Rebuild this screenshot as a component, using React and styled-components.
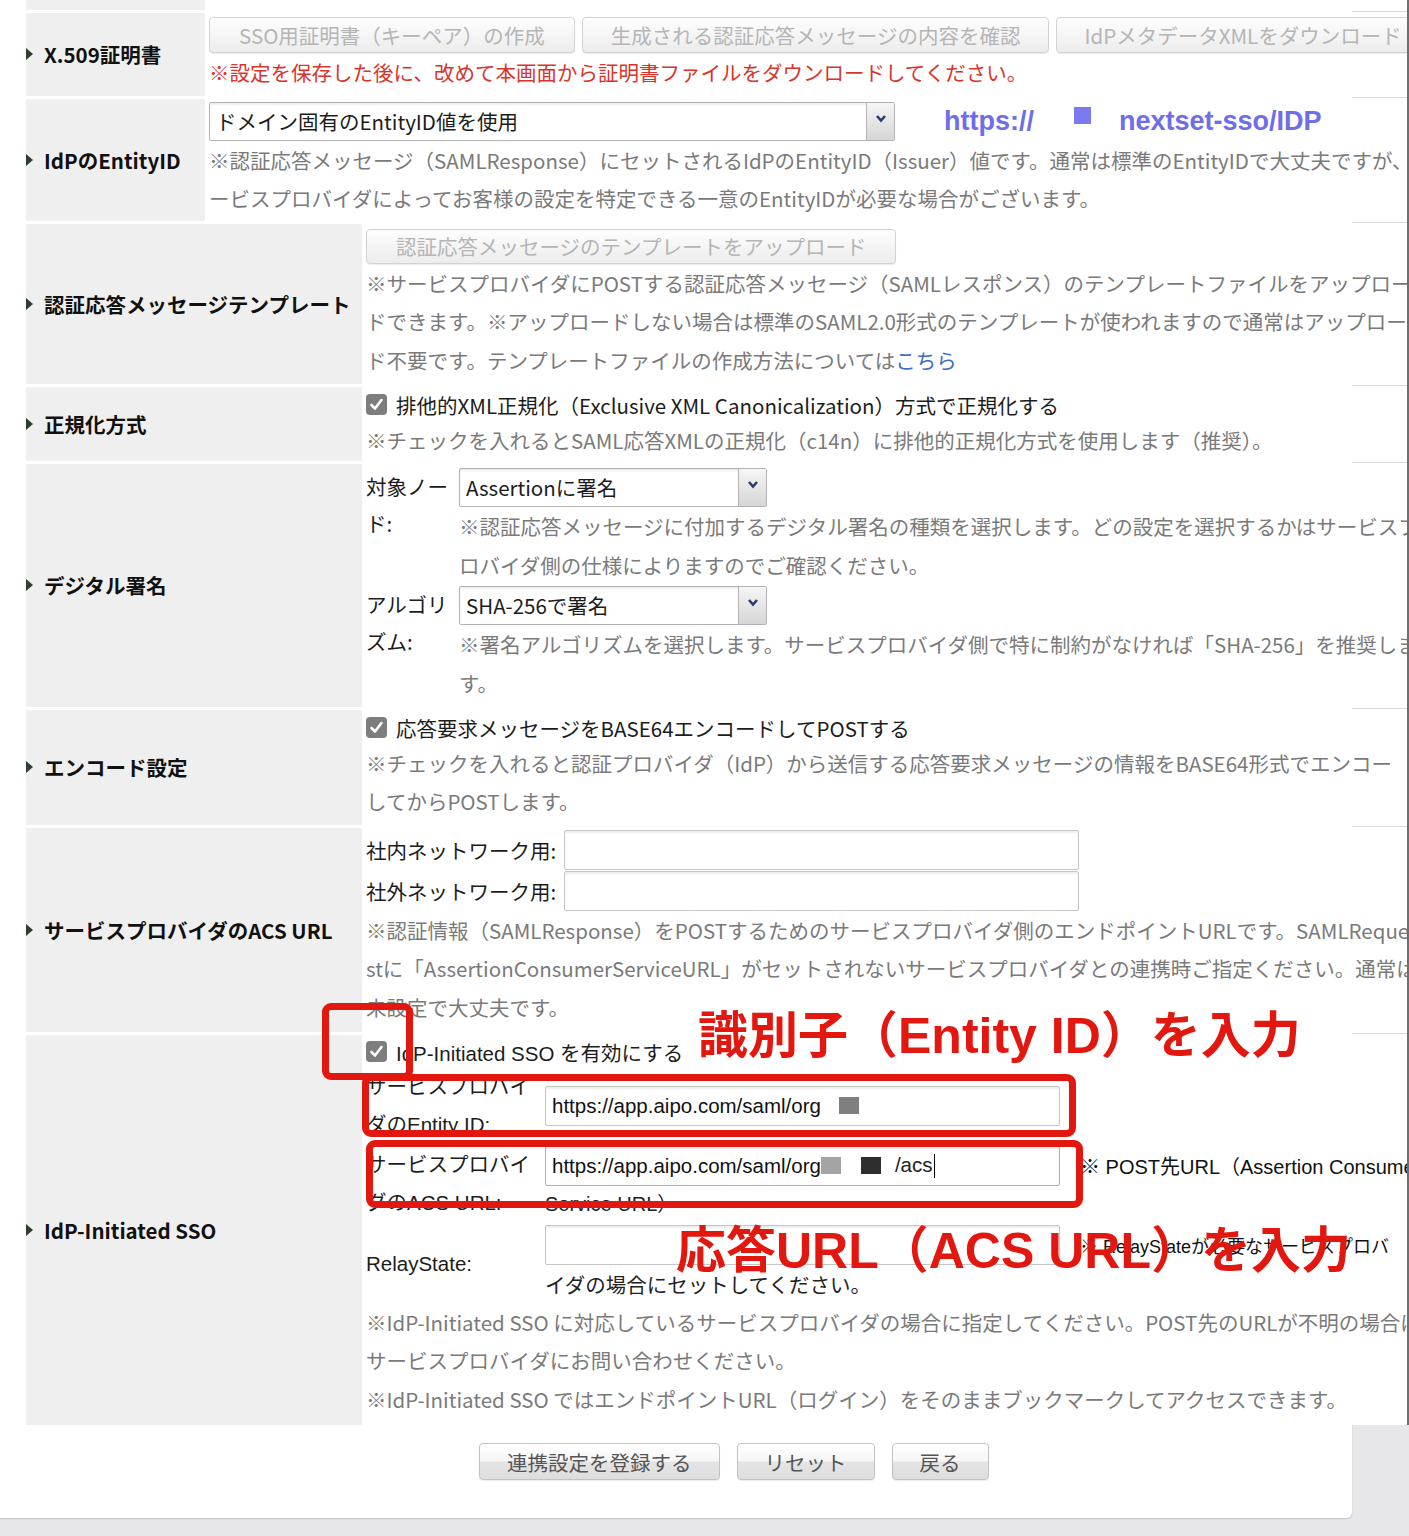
import React from "react";
import styled, { createGlobalStyle } from "styled-components";

const GlobalStyle = createGlobalStyle`
  html, body { margin: 0; padding: 0; }
  body {
    background: #e7e7e9;
    overflow: hidden;
    font-family: "Noto Sans CJK JP", "Noto Sans", sans-serif;
  }
`;

const LATIN = `"Liberation Sans", "Noto Sans CJK JP", sans-serif`;

const Page = styled.div`
  position: relative;
  width: 1409px;
  height: 1536px;
  overflow: hidden;
  background: #e7e7e9;
  font-size: 20.5px;
  color: #222;
`;

const Card = styled.div`
  width: 1352px;
  box-sizing: border-box;
  padding: 0 0 38px 26px;
  background: #fff;
  border-bottom-right-radius: 6px;
  box-shadow: 0 1px 2px rgba(0, 0, 0, 0.14);
`;

const TableWrap = styled.div`
  display: flex;
  flex-direction: column;
  gap: 3px;
  width: 1383px;
  box-sizing: border-box;
  background: #fff;
  border-right: 2px solid #6e6e6e;
  overflow: hidden;
`;

const Row = styled.div`
  position: relative;
  display: grid;
  grid-template-columns: ${(p) => p.$label}px 1fr;
  column-gap: 4px;
  min-height: ${(p) => p.$h || 0}px;
  &::after {
    content: "";
    position: absolute;
    right: 0;
    bottom: -2px;
    width: 55px;
    height: 1px;
    background: #dadada;
  }
`;

const Label = styled.div`
  display: flex;
  align-items: center;
  gap: 11px;
  background: #efefef;
  font-weight: 700;
  font-size: 20.5px;
  color: #111;
  white-space: nowrap;
  &::before {
    content: "";
    display: ${(p) => (p.$bare ? "none" : "block")};
    border-left: 7px solid #2f3e30;
    border-top: 6px solid transparent;
    border-bottom: 6px solid transparent;
  }
`;

const Cell = styled.div`
  min-width: 0;
  overflow: hidden;
  padding: ${(p) => p.$pad || "0"};
`;

const Note = styled.div`
  line-height: ${(p) => p.$lh || 38.6}px;
  white-space: nowrap;
  color: ${(p) =>
    p.$tone === "red" ? "#d9342b" : p.$tone === "dark" ? "#222" : "#7a7a7a"};
  font-family: ${(p) => (p.$latin ? LATIN : "inherit")};
  font-size: ${(p) => p.$size || 20.5}px;
`;

const Link = styled.a`
  color: #3a6fc4;
  text-decoration: none;
`;

const ButtonBar = styled.div`
  display: flex;
  gap: 7px;
`;

const Btn = styled.button`
  flex-shrink: 0;
  height: ${(p) => p.$h || 36}px;
  padding: 0 ${(p) => p.$px || 29}px;
  font-family: "Noto Sans CJK JP", sans-serif;
  font-size: 20.5px;
  white-space: nowrap;
  color: ${(p) => (p.$muted ? "#b5b5b5" : "#555")};
  border: 1px solid ${(p) => (p.$muted ? "#d3d3d3" : "#c2c2c2")};
  border-radius: 4px;
  background: ${(p) =>
    p.$muted
      ? "linear-gradient(#fefefe, #ececec)"
      : "linear-gradient(#ffffff 0%, #f6f6f6 48%, #e4e4e4 52%, #dedede 100%)"};
  box-shadow: 0 1px 1px rgba(0, 0, 0, 0.08);
  cursor: pointer;
`;

const Select = styled.div`
  display: flex;
  flex-shrink: 0;
  width: ${(p) => p.$w}px;
  height: 39px;
  box-sizing: border-box;
  border: 1px solid #b3b3b3;
  border-radius: 2px;
  background: #fff;
  box-shadow: inset 0 2px 2px rgba(0, 0, 0, 0.07);
`;

const SelectValue = styled.span`
  flex: 1;
  padding-left: 6px;
  line-height: 37px;
  color: #1c1c1c;
  white-space: nowrap;
  overflow: hidden;
`;

const SelectArrow = styled.span`
  width: 28px;
  display: flex;
  justify-content: center;
  padding-top: 11px;
  box-sizing: border-box;
  border-left: 1px solid #b3b3b3;
  background: linear-gradient(#f6f6f6, #d6d6d6);
`;

const Chevron = () => (
  <svg width="12" height="9" viewBox="0 0 12 9">
    <path d="M2 2 L6 6.5 L10 2" fill="none" stroke="#2c3c70" strokeWidth="2.6" />
  </svg>
);

const EntityLine = styled.div`
  display: flex;
  align-items: center;
`;

const Mark = styled.span`
  font-family: ${LATIN};
  font-weight: 700;
  font-size: 27px;
  color: #6e6eea;
  margin-left: ${(p) => p.$ml}px;
  white-space: nowrap;
`;

const MarkSquare = styled.span`
  align-self: flex-start;
  width: 17px;
  height: 17px;
  margin: 5px 0 0 40px;
  background: #7a7af0;
`;

const CheckLine = styled.div`
  display: flex;
  align-items: center;
  gap: 9px;
  height: 32px;
  color: #1c1c1c;
  white-space: nowrap;
  font-family: ${(p) => (p.$latin ? LATIN : "inherit")};
`;

const Box = styled.span`
  flex-shrink: 0;
  width: 21px;
  height: 21px;
  border-radius: 4px;
  background: #7d7d7d;
  display: inline-flex;
  align-items: center;
  justify-content: center;
`;

const Checkbox = () => (
  <Box>
    <svg width="15" height="15" viewBox="0 0 15 15">
      <path d="M2.5 8 L6 11.5 L12.5 3" fill="none" stroke="#fff" strokeWidth="2.6" strokeLinecap="round" strokeLinejoin="round" />
    </svg>
  </Box>
);

const Stack = styled.div`
  display: flex;
  flex-direction: column;
  gap: ${(p) => p.$gap || 0}px;
`;

const SubGrid = styled.div`
  display: grid;
  grid-template-columns: ${(p) => p.$col}px 1fr;
  align-items: ${(p) => p.$align || "center"};
`;

const SubLabel = styled.div`
  color: #1c1c1c;
  line-height: ${(p) => p.$lh || 38}px;
  white-space: nowrap;
  font-family: ${(p) => (p.$latin ? LATIN : "inherit")};
`;

const InputLine = styled.div`
  display: flex;
  align-items: center;
  height: 40px;
`;

const TextBox = styled.div`
  flex-shrink: 0;
  width: ${(p) => p.$w}px;
  height: 40px;
  box-sizing: border-box;
  display: flex;
  align-items: center;
  padding-left: 6px;
  border: 1px solid ${(p) => (p.$focus ? "#a3b4cc" : "#c6c6c6")};
  border-radius: 2px;
  background: #fff;
  box-shadow: inset 0 2px 2px rgba(0, 0, 0, 0.07);
  font-family: ${LATIN};
  font-size: 20.5px;
  color: #111;
  white-space: nowrap;
  overflow: hidden;
`;

const FieldLabel = styled.span`
  width: ${(p) => p.$w}px;
  flex-shrink: 0;
  color: #1c1c1c;
  white-space: nowrap;
`;

const Redact = styled.span`
  display: inline-block;
  flex-shrink: 0;
  width: 20px;
  height: 17px;
  background: ${(p) => p.$c};
  margin-left: ${(p) => p.$ml || 0}px;
`;

const Caret = styled.span`
  display: inline-block;
  width: 1.5px;
  height: 24px;
  background: #000;
  margin-left: 1px;
`;

const Aside = styled.span`
  margin-left: 20px;
  font-family: ${LATIN};
  font-size: ${(p) => p.$size || 20}px;
  color: #111;
  white-space: nowrap;
`;

const ButtonRow = styled.div`
  display: flex;
  gap: 17px;
  margin-top: 18px;
  padding-left: 453px;
`;

const RedBox = styled.div`
  position: absolute;
  left: ${(p) => p.$x}px;
  top: ${(p) => p.$y}px;
  width: ${(p) => p.$w}px;
  height: ${(p) => p.$h}px;
  box-sizing: border-box;
  border: 7px solid #e2170f;
  border-radius: 9px;
  pointer-events: none;
`;

const RedText = styled.div`
  position: absolute;
  left: ${(p) => p.$x}px;
  top: ${(p) => p.$y}px;
  font-family: ${LATIN};
  font-weight: 700;
  font-size: 50px;
  line-height: 50px;
  color: #e2170f;
  white-space: nowrap;
  pointer-events: none;
`;

export default function App() {
  return (
    <Page>
      <GlobalStyle />
      <Card>
        <TableWrap>
          <Row $label={179} $h={10}>
            <Label $bare />
            <Cell />
          </Row>

          <Row $label={179}>
            <Label>X.509証明書</Label>
            <Cell $pad="4px 0 4px">
              <ButtonBar>
                <Btn $muted $px={29}>SSO用証明書（キーペア）の作成</Btn>
                <Btn $muted $px={28}>生成される認証応答メッセージの内容を確認</Btn>
                <Btn $muted $px={27}>IdPメタデータXMLをダウンロード</Btn>
              </ButtonBar>
              <Note $tone="red">※設定を保存した後に、改めて本画面から証明書ファイルをダウンロードしてください。</Note>
            </Cell>
          </Row>

          <Row $label={179}>
            <Label>IdPのEntityID</Label>
            <Cell $pad="3px 0 3px">
              <EntityLine>
                <Select $w={686}>
                  <SelectValue>ドメイン固有のEntityID値を使用</SelectValue>
                  <SelectArrow><Chevron /></SelectArrow>
                </Select>
                <Mark $ml={49}>https://</Mark>
                <MarkSquare />
                <Mark $ml={28}>nextset-sso/IDP</Mark>
              </EntityLine>
              <Note>※認証応答メッセージ（SAMLResponse）にセットされるIdPのEntityID（Issuer）値です。通常は標準のEntityIDで大丈夫ですが、</Note>
              <Note>ービスプロバイダによってお客様の設定を特定できる一意のEntityIDが必要な場合がございます。</Note>
            </Cell>
          </Row>

          <Row $label={336}>
            <Label>認証応答メッセージテンプレート</Label>
            <Cell $pad="5px 0 4px">
              <ButtonBar>
                <Btn $muted $h={35} $px={29}>認証応答メッセージのテンプレートをアップロード</Btn>
              </ButtonBar>
              <Note>※サービスプロバイダにPOSTする認証応答メッセージ（SAMLレスポンス）のテンプレートファイルをアップロー</Note>
              <Note>ドできます。※アップロードしない場合は標準のSAML2.0形式のテンプレートが使われますので通常はアップロー</Note>
              <Note>ド不要です。テンプレートファイルの作成方法については<Link href="#">こちら</Link></Note>
            </Cell>
          </Row>

          <Row $label={336}>
            <Label>正規化方式</Label>
            <Cell $pad="2px 0 2px">
              <CheckLine>
                <Checkbox />
                排他的XML正規化（Exclusive XML Canonicalization）方式で正規化する
              </CheckLine>
              <Note>※チェックを入れるとSAML応答XMLの正規化（c14n）に排他的正規化方式を使用します（推奨）。</Note>
            </Cell>
          </Row>

          <Row $label={336}>
            <Label>デジタル署名</Label>
            <Cell $pad="4px 0 4px">
              <Stack $gap={2}>
                <SubGrid $col={93} $align="start">
                  <SubLabel $lh={37}>対象ノー<br />ド:</SubLabel>
                  <div>
                    <Select $w={308}>
                      <SelectValue>Assertionに署名</SelectValue>
                      <SelectArrow><Chevron /></SelectArrow>
                    </Select>
                    <Note>※認証応答メッセージに付加するデジタル署名の種類を選択します。どの設定を選択するかはサービスプ</Note>
                    <Note>ロバイダ側の仕様によりますのでご確認ください。</Note>
                  </div>
                </SubGrid>
                <SubGrid $col={93} $align="start">
                  <SubLabel $lh={37}>アルゴリ<br />ズム:</SubLabel>
                  <div>
                    <Select $w={308}>
                      <SelectValue>SHA-256で署名</SelectValue>
                      <SelectArrow><Chevron /></SelectArrow>
                    </Select>
                    <Note>※署名アルゴリズムを選択します。サービスプロバイダ側で特に制約がなければ「SHA-256」を推奨しま</Note>
                    <Note>す。</Note>
                  </div>
                </SubGrid>
              </Stack>
            </Cell>
          </Row>

          <Row $label={336}>
            <Label>エンコード設定</Label>
            <Cell $pad="2px 0 4px">
              <CheckLine>
                <Checkbox />
                応答要求メッセージをBASE64エンコードしてPOSTする
              </CheckLine>
              <Note>※チェックを入れると認証プロバイダ（IdP）から送信する応答要求メッセージの情報をBASE64形式でエンコー</Note>
              <Note>してからPOSTします。</Note>
            </Cell>
          </Row>

          <Row $label={336}>
            <Label>サービスプロバイダのACS URL</Label>
            <Cell $pad="2px 0 5px">
              <Stack $gap={1}>
                <InputLine>
                  <FieldLabel $w={198}>社内ネットワーク用:</FieldLabel>
                  <TextBox $w={515} />
                </InputLine>
                <InputLine>
                  <FieldLabel $w={198}>社外ネットワーク用:</FieldLabel>
                  <TextBox $w={515} />
                </InputLine>
              </Stack>
              <Note>※認証情報（SAMLResponse）をPOSTするためのサービスプロバイダ側のエンドポイントURLです。SAMLReque</Note>
              <Note>stに「AssertionConsumerServiceURL」がセットされないサービスプロバイダとの連携時ご指定ください。通常は</Note>
              <Note>未設定で大丈夫です。</Note>
            </Cell>
          </Row>

          <Row $label={336}>
            <Label>IdP-Initiated SSO</Label>
            <Cell $pad="1px 0 7px">
              <CheckLine $latin>
                <Checkbox />
                IdP-Initiated SSO を有効にする
              </CheckLine>
              <Stack $gap={2}>
                <SubGrid $col={179}>
                  <SubLabel $latin>サービスプロバイ<br />ダのEntity ID:</SubLabel>
                  <InputLine>
                    <TextBox $w={515}>
                      https://app.aipo.com/saml/org
                      <Redact $c="#7f7f7f" $ml={18} />
                    </TextBox>
                  </InputLine>
                </SubGrid>
                <SubGrid $col={179}>
                  <SubLabel $latin>サービスプロバイ<br />ダのACS URL:</SubLabel>
                  <div>
                    <InputLine>
                      <TextBox $w={515} $focus>
                        https://app.aipo.com/saml/org
                        <Redact $c="#a4a4a4" />
                        <Redact $c="#2e2e2e" $ml={20} />
                        <Note as="span" $tone="dark" $latin style={{ marginLeft: 14 }}>/acs</Note>
                        <Caret />
                      </TextBox>
                      <Aside>※ POST先URL（Assertion Consumer</Aside>
                    </InputLine>
                    <Note $tone="dark" $latin $lh={37} $size={20}>Service URL）</Note>
                  </div>
                </SubGrid>
                <SubGrid $col={179}>
                  <SubLabel $latin>RelayState:</SubLabel>
                  <div>
                    <InputLine>
                      <TextBox $w={515} />
                      <Aside $size={18}>※ RelayStateが必要なサービスプロバ</Aside>
                    </InputLine>
                    <Note $tone="dark" $lh={38}>イダの場合にセットしてください。</Note>
                  </div>
                </SubGrid>
              </Stack>
              <Note>※IdP-Initiated SSO に対応しているサービスプロバイダの場合に指定してください。POST先のURLが不明の場合は</Note>
              <Note>サービスプロバイダにお問い合わせください。</Note>
              <Note>※IdP-Initiated SSO ではエンドポイントURL（ログイン）をそのままブックマークしてアクセスできます。</Note>
            </Cell>
          </Row>
        </TableWrap>

        <ButtonRow>
          <Btn $h={37} $px={27}>連携設定を登録する</Btn>
          <Btn $h={37} $px={27}>リセット</Btn>
          <Btn $h={37} $px={27}>戻る</Btn>
        </ButtonRow>
      </Card>

      <RedBox $x={322} $y={1003} $w={91} $h={77} />
      <RedBox $x={362} $y={1074} $w={714} $h={63} />
      <RedBox $x={366} $y={1140} $w={717} $h={68} />
      <RedText $x={698} $y={1011}>識別子（Entity ID）を入力</RedText>
      <RedText $x={676} $y={1226}>応答URL（ACS URL）を入力</RedText>
    </Page>
  );
}
